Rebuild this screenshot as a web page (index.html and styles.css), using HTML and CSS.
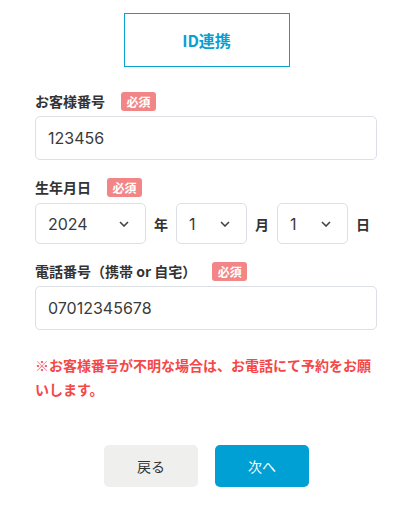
FILE: index.html
```html
<!DOCTYPE html>
<html lang="ja">
<head>
<meta charset="utf-8">
<title>ID連携</title>
<link rel="stylesheet" href="styles.css">
</head>
<body>
<div class="page">
  <div class="tab-wrap"><div class="tab">ID連携</div></div>

  <div class="field first">
    <div class="label-row"><span class="label">お客様番号</span><span class="badge">必須</span></div>
    <div class="input">123456</div>
  </div>

  <div class="field">
    <div class="label-row"><span class="label">生年月日</span><span class="badge">必須</span></div>
    <div class="date-row">
      <div class="select year"><span>2024</span><svg class="chev" width="10" height="6" viewBox="0 0 10 6"><path d="M1 1 L5 5 L9 1" fill="none" stroke="#444" stroke-width="1.6"/></svg></div>
      <span class="unit">年</span>
      <div class="select small"><span>1</span><svg class="chev" width="10" height="6" viewBox="0 0 10 6"><path d="M1 1 L5 5 L9 1" fill="none" stroke="#444" stroke-width="1.6"/></svg></div>
      <span class="unit">月</span>
      <div class="select small"><span>1</span><svg class="chev" width="10" height="6" viewBox="0 0 10 6"><path d="M1 1 L5 5 L9 1" fill="none" stroke="#444" stroke-width="1.6"/></svg></div>
      <span class="unit">日</span>
    </div>
  </div>

  <div class="field">
    <div class="label-row"><span class="label">電話番号（携帯 or 自宅）</span><span class="badge">必須</span></div>
    <div class="input">07012345678</div>
  </div>

  <p class="notice">※お客様番号が不明な場合は、お電話にて予約をお願いします。</p>

  <div class="buttons">
    <button class="btn back">戻る</button>
    <button class="btn next">次へ</button>
  </div>
</div>
</body>
</html>
```

FILE: styles.css
```css
* { box-sizing: border-box; }
body {
  margin: 0;
  background: #fff;
  font-family: "Noto Sans CJK JP", "Noto Sans", sans-serif;
  color: #333;
}
.page {
  padding: 13px 36px 0 35px;
}
.tab-wrap {
  display: flex;
  justify-content: center;
  padding-left: 1px;
}
.tab {
  width: 166px;
  height: 54px;
  border: 1px solid #0a9fd2;
  color: #0a9fd2;
  font-weight: bold;
  font-size: 16px;
  display: flex;
  align-items: center;
  justify-content: center;
}
.field {
  margin-top: 18px;
}
.field.first {
  margin-top: 25px;
}
.label-row {
  display: flex;
  align-items: center;
  height: 19px;
  margin-bottom: 5px;
}
.label {
  font-size: 14px;
  font-weight: bold;
  color: #333;
  line-height: 19px;
}
.badge {
  margin-left: 16px;
  width: 35px;
  height: 19px;
  border-radius: 3px;
  background: #f28686;
  color: #fff;
  font-size: 12px;
  font-weight: bold;
  display: flex;
  align-items: center;
  justify-content: center;
}
.input {
  width: 342px;
  height: 44px;
  border: 1px solid #dcdfe4;
  border-radius: 5px;
  padding-left: 12px;
  display: flex;
  align-items: center;
  font-family: "Inter", "Noto Sans CJK JP", sans-serif;
  font-size: 16px;
  color: #3a3a3a;
}
.date-row {
  display: flex;
  align-items: center;
  gap: 8px;
  margin-top: 6px;
}
.select {
  height: 41px;
  border: 1px solid #dcdfe4;
  border-radius: 5px;
  display: flex;
  align-items: center;
  justify-content: space-between;
  padding: 0 16px 0 12px;
  font-family: "Inter", "Noto Sans CJK JP", sans-serif;
  font-size: 16px;
  color: #3a3a3a;
}
.select.year { width: 111px; }
.select.small { width: 71px; }
.chev { display: block; }
.unit {
  font-size: 14px;
  font-weight: bold;
  color: #333;
  width: 14px;
}
.notice {
  margin: 23px 0 0;
  font-size: 14px;
  font-weight: bold;
  line-height: 24px;
  color: #f44848;
  width: 342px;
}
.buttons {
  display: flex;
  justify-content: center;
  gap: 17px;
  margin-top: 44px;
  padding-left: 1px;
}
.btn {
  width: 94px;
  height: 42px;
  border: none;
  border-radius: 5px;
  font-family: "Noto Sans CJK JP", "Noto Sans", sans-serif;
  font-size: 14px;
  padding: 0;
}
.btn.back {
  background: #eff0ee;
  color: #333;
}
.btn.next {
  background: #009fd4;
  color: #fff;
}
```
